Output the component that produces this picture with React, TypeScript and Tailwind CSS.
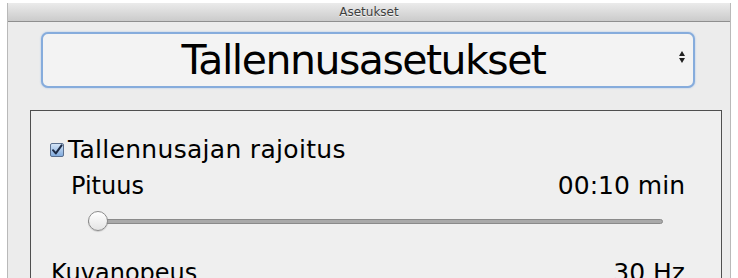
const font = { fontFamily: '"DejaVu Sans", "Liberation Sans", sans-serif' };

const CheckBox = () => (
  <svg width="14" height="14" viewBox="0 0 14 14" className="shrink-0">
    <defs>
      <linearGradient id="cbFill" x1="0" y1="0" x2="0" y2="1">
        <stop offset="0" stopColor="#d6e6f8" />
        <stop offset="1" stopColor="#7fa9dc" />
      </linearGradient>
    </defs>
    <rect x="0.5" y="0.5" width="13" height="13" rx="1.5" fill="url(#cbFill)" stroke="#5a6f8e" />
    <path d="M3 7.2 L5.8 10.4 L11.6 2.4" fill="none" stroke="#1c2a44" strokeWidth="2" strokeLinecap="round" strokeLinejoin="round" />
  </svg>
);

const ValueRow = ({ label, value, className }: { label: string; value: string; className: string }) => (
  <div className={`flex items-center justify-between h-[28px] text-[24px] leading-[28px] text-black ${className}`}>
    <span>{label}</span>
    <span className="text-[25px]">{value}</span>
  </div>
);

export default function App() {
  return (
    <div className="w-[738px] h-[278px] overflow-hidden bg-white" style={font}>
      <div className="ml-[7px] mt-[3px] w-[724px] h-[300px] border-x border-[#b9b9b9] bg-[#ececec] flex flex-col">
        <div className="h-[19px] shrink-0 border-b border-[#8f8f8f] bg-gradient-to-b from-[#ebebeb] to-[#cbcbcb] flex items-center justify-center">
          <span className="text-[12px] leading-none text-[#3f3f3f] [text-shadow:0_1px_0_#f4f4f4]">Asetukset</span>
        </div>

        <div className="ml-[33px] mt-[10px] w-[654px] h-[56px] shrink-0 relative rounded-[7px] border-2 border-[#86acdc] bg-[#f3f3f3] shadow-[0_0_2px_#9fbfe6] flex items-center justify-center">
          <span className="text-[41px] leading-[48px] tracking-[-1.5px] text-black pr-[9px]">Tallennusasetukset</span>
          <div className="absolute right-[8px] top-[17px] flex flex-col items-center gap-[2px]">
            <svg width="6" height="5" viewBox="0 0 6 5">
              <path d="M3 0 L6 5 L0 5 Z" fill="#222" />
            </svg>
            <svg width="6" height="5" viewBox="0 0 6 5">
              <path d="M0 0 L6 0 L3 5 Z" fill="#222" />
            </svg>
          </div>
        </div>

        <div className="ml-[22px] mt-[22px] w-[692px] flex-1 border border-[#4f4f4f] bg-[#efefef] pt-[25px]">
          <div className="flex items-center h-[28px] pl-[19px]">
            <CheckBox />
            <span className="ml-[4px] text-[25px] leading-[28px] tracking-[0.3px] text-black">Tallennusajan rajoitus</span>
          </div>

          <ValueRow label="Pituus" value="00:10 min" className="mt-[8px] pl-[40px] pr-[36px]" />

          <div className="mt-[11px] ml-[57px] w-[575px] h-[20px] relative flex items-center">
            <div className="w-full h-[5px] rounded-full bg-[#a9a9a9] border border-[#8a8a8a]" />
            <div className="absolute left-0 top-0 w-[20px] h-[20px] rounded-full border border-[#8c8c8c] bg-gradient-to-b from-white to-[#e4e4e4] shadow-[0_1px_1px_rgba(0,0,0,0.15)]" />
          </div>

          <ValueRow label="Kuvanopeus" value="30 Hz" className="mt-[28px] pl-[20px] pr-[36px]" />
        </div>
      </div>
    </div>
  );
}
